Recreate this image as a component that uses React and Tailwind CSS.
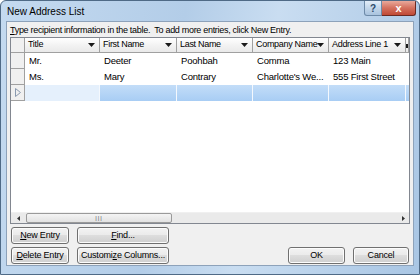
import React from "react";

const cols = [
  { key: "title", label: "Title", w: "w-[75px]" },
  { key: "first", label: "First Name", w: "w-[77px]" },
  { key: "last", label: "Last Name", w: "w-[76px]" },
  { key: "company", label: "Company Name", w: "w-[76px]" },
  { key: "addr", label: "Address Line 1", w: "w-[77px]" },
];

const rows = [
  { title: "Mr.", first: "Deeter", last: "Poohbah", company: "Comma", addr: "123 Main" },
  { title: "Ms.", first: "Mary", last: "Contrary", company: "Charlotte's We...", addr: "555 First Street" },
];

function DownArrow() {
  return (
    <svg width="7" height="4" viewBox="0 0 7 4" className="shrink-0">
      <path d="M0 0h7L3.5 4z" fill="#1a1a1a" />
    </svg>
  );
}

function Btn({ children, className = "" }) {
  return (
    <button
      className={
        "h-[17px] rounded-[3px] border border-[#707070] bg-[linear-gradient(#f3f3f3_0%,#ebebeb_45%,#dddddd_50%,#cfcfcf_100%)] text-[9px] tracking-[-0.2px] text-black leading-none flex items-center justify-center shadow-[inset_0_0_0_1px_#fcfcfc] whitespace-nowrap " +
        className
      }
    >
      {children}
    </button>
  );
}

export default function App() {
  return (
    <div className="w-[420px] h-[275px] overflow-hidden font-['Liberation_Sans',Arial,sans-serif] bg-[linear-gradient(100deg,#c4daf0_0%,#b3cde8_40%,#c9ddf1_60%,#a9c6e4_100%)] border border-[#4f6a86] rounded-t-[6px] flex flex-col">
      {/* Title bar */}
      <div className="h-[20px] flex items-start justify-between shrink-0">
        <span className="pl-[6px] pt-[5px] text-[10px] leading-[12px] text-black">New Address List</span>
        <div className="flex mr-[3px]">
          <div className="w-[18px] h-[15px] rounded-bl-[3px] border border-[#6d8aa8] border-t-0 bg-[linear-gradient(#e2edf8,#c2d6ea_50%,#a9c3de)] flex items-center justify-center text-[10px] text-[#2c4a6a] font-bold">
            ?
          </div>
          <div className="w-[34px] h-[15px] rounded-br-[3px] border border-[#6b2a22] border-t-0 border-l-0 bg-[linear-gradient(#e9a99b,#d4705e_50%,#c04a36)] flex items-center justify-center text-[11px] text-white font-bold">
            x
          </div>
        </div>
      </div>

      {/* Client area */}
      <div className="mx-[5px] h-[245px] bg-[#f0f0f0] border border-[#8da2ba] flex flex-col px-[3px] shrink-0">
        <div className="h-[14px] mt-[1px] text-[9px] tracking-[-0.3px] text-black leading-[14px] whitespace-nowrap">
          <span className="underline">T</span>ype recipient information in the table.&nbsp; To add more entries, click New Entry.
        </div>

        {/* Table */}
        <div className="h-[187px] border border-[#828790] bg-white flex flex-col overflow-hidden">
          <div className="flex-1 overflow-hidden">
            {/* Header */}
            <div className="flex h-[15px] border-b border-[#a0a0a0] bg-[linear-gradient(#ffffff,#f3f3f3_50%,#e9e9e9)]">
              <div className="w-[14px] shrink-0 border-r border-[#a0a0a0] bg-[#f0f0f0]" />
              {cols.map((c) => (
                <div
                  key={c.key}
                  className={c.w + " shrink-0 border-r border-[#a0a0a0] flex items-center justify-between pl-[3px] pr-[4px] text-[9px] tracking-[-0.3px] text-black whitespace-nowrap overflow-hidden"}
                >
                  <span>{c.label}</span>
                  <DownArrow />
                </div>
              ))}
              <div className="w-[3px] shrink-0 border-r border-[#a0a0a0] flex items-center">
                <span className="w-[2px] h-[4px] bg-[#1a1a1a] mt-[1px]" />
              </div>
            </div>

            {rows.map((r, i) => (
              <div key={i} className="flex h-[16px]">
                <div className="w-[14px] shrink-0 border-r border-b border-[#a0a0a0] bg-[#f0f0f0]" />
                {cols.map((c) => (
                  <div
                    key={c.key}
                    className={c.w + " shrink-0 border-r border-white pl-[4px] text-[9.5px] tracking-[-0.2px] leading-[16px] text-black whitespace-nowrap overflow-hidden"}
                  >
                    {r[c.key]}
                  </div>
                ))}
              </div>
            ))}

            {/* New row */}
            <div className="flex h-[16px]">
              <div className="w-[14px] shrink-0 border-r border-b border-[#a0a0a0] bg-[#f0f0f0] flex items-center justify-center">
                <svg width="6" height="9" viewBox="0 0 6 9">
                  <path d="M0.5 0.5v8l5-4z" fill="none" stroke="#8a9ab0" />
                </svg>
              </div>
              <div className="w-[75px] shrink-0 border-r border-[#f4f8fd] bg-[#e5f0fc]" />
              {cols.slice(1).map((c) => (
                <div
                  key={c.key}
                  className={c.w + " shrink-0 border-r border-[#f4f8fd] bg-[linear-gradient(#c3ddf8,#a8cdf4)]"}
                />
              ))}
              <div className="w-[3px] shrink-0 bg-[linear-gradient(#c3ddf8,#a8cdf4)]" />
            </div>
          </div>

          {/* Horizontal scrollbar */}
          <div className="h-[11px] shrink-0 flex items-center bg-[#eaeaea] border-t border-[#f0f0f0]">
            <div className="w-[14px] flex items-center justify-center">
              <svg width="3" height="5" viewBox="0 0 3 5">
                <path d="M3 0v5L0 2.5z" fill="#333" />
              </svg>
            </div>
            <div className="w-[146px] h-[10px] ml-[1px] rounded-[2px] border border-[#9a9a9a] bg-[linear-gradient(#f4f4f4,#e2e2e2)] flex items-center justify-center">
              <span className="text-[6px] leading-none text-[#555] tracking-[1px]">|||</span>
            </div>
            <div className="flex-1" />
            <div className="w-[12px] flex items-center justify-center">
              <svg width="3" height="5" viewBox="0 0 3 5">
                <path d="M0 0v5L3 2.5z" fill="#333" />
              </svg>
            </div>
          </div>
        </div>

        {/* Buttons */}
        <div className="mt-[3px] flex pl-[1px]">
          <div className="flex flex-col gap-[3px]">
            <div className="flex gap-[8px]">
              <Btn className="w-[58px]">
                <span className="underline">N</span>ew Entry
              </Btn>
              <Btn className="w-[92px]">
                <span className="underline">F</span>ind...
              </Btn>
            </div>
            <div className="flex gap-[8px]">
              <Btn className="w-[58px]">
                <span className="underline">D</span>elete Entry
              </Btn>
              <Btn className="w-[92px]">
                Customi<span className="underline">z</span>e Columns...
              </Btn>
            </div>
          </div>
          <div className="flex-1" />
          <div className="flex gap-[8px] items-end pr-[1px]">
            <Btn className="w-[57px]">OK</Btn>
            <Btn className="w-[56px]">Cancel</Btn>
          </div>
        </div>
      </div>
    </div>
  );
}
